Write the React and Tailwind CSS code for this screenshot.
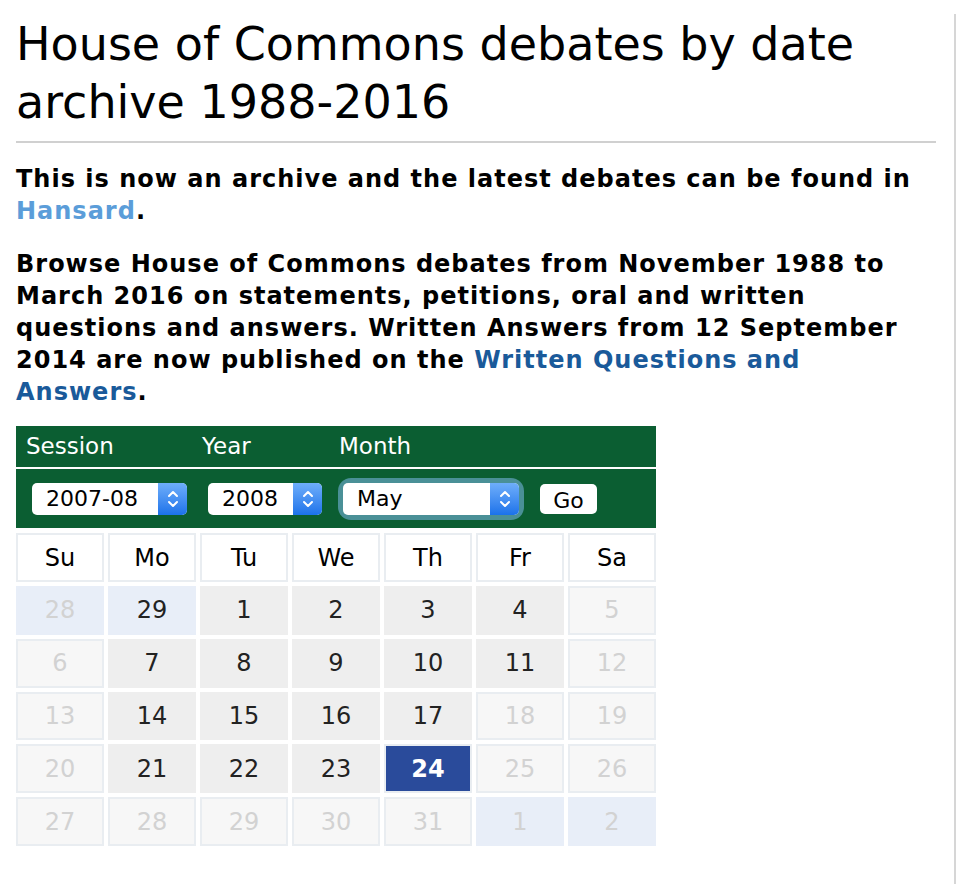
import React from 'react'

const FONT = { fontFamily: '"DejaVu Sans", Verdana, sans-serif' }

// kind: d = has debates, e = empty, o = other month, od = other month with debates, s = selected
const WEEKS = [
  [['28', 'o'], ['29', 'od'], ['1', 'd'], ['2', 'd'], ['3', 'd'], ['4', 'd'], ['5', 'e']],
  [['6', 'e'], ['7', 'd'], ['8', 'd'], ['9', 'd'], ['10', 'd'], ['11', 'd'], ['12', 'e']],
  [['13', 'e'], ['14', 'd'], ['15', 'd'], ['16', 'd'], ['17', 'd'], ['18', 'e'], ['19', 'e']],
  [['20', 'e'], ['21', 'd'], ['22', 'd'], ['23', 'd'], ['24', 's'], ['25', 'e'], ['26', 'e']],
  [['27', 'e'], ['28', 'e'], ['29', 'e'], ['30', 'e'], ['31', 'e'], ['1', 'o'], ['2', 'o']],
]

const DAYS = ['Su', 'Mo', 'Tu', 'We', 'Th', 'Fr', 'Sa']

const cellClass = {
  d: 'bg-[#eeeeee] border-[#eeeeee] text-[#222]',
  e: 'bg-[#f7f7f7] border-[#e9edf1] text-[#d2d2d2]',
  o: 'bg-[#e8eef8] border-[#e8eef8] text-[#d2d2d2]',
  od: 'bg-[#e8eef8] border-[#e8eef8] text-[#222]',
  s: 'bg-[#2a4b9b] border-[#e9edf1] text-white font-bold',
}

function Chevrons() {
  return (
    <svg width="12" height="20" viewBox="0 0 12 20" fill="none" stroke="white" strokeWidth="2" strokeLinecap="round" strokeLinejoin="round">
      <path d="M2 7 L6 3 L10 7" />
      <path d="M2 13 L6 17 L10 13" />
    </svg>
  )
}

function FakeSelect({ value, width }) {
  return (
    <div className={`flex h-[32px] rounded-[5px] bg-white overflow-hidden ${width}`}>
      <span className="flex-1 pl-[14px] text-[22px] leading-[32px] text-black">{value}</span>
      <span className="w-[29px] flex items-center justify-center bg-gradient-to-b from-[#6eaefa] to-[#1a72ea]">
        <Chevrons />
      </span>
    </div>
  )
}

export default function App() {
  return (
    <div className="flex h-[884px] bg-white" style={FONT}>
      <div className="flex-1 pl-4 pr-[18px]">
        <h1 className="mt-4 pb-[10px] border-b-2 border-[#d0d0d0] text-[46px] leading-[57.6px] font-normal text-black">
          House of Commons debates by date archive 1988-2016
        </h1>

        <p className="mt-[20px] text-[24px] leading-[32px] tracking-[1px] font-bold text-black">
          This is now an archive and the latest debates can be found in{' '}
          <a className="text-[#5b9dd9]">Hansard</a>.
        </p>
        <p className="mt-[21px] text-[24px] leading-[32px] tracking-[1px] font-bold text-black">
          Browse House of Commons debates from November 1988 to March 2016 on statements, petitions, oral and written
          questions and answers. Written Answers from 12 September 2014 are now published on the{' '}
          <a className="text-[#1a5a9a]">Written Questions and Answers</a>.
        </p>

        <div className="mt-[18px] w-[640px]">
          <div className="flex h-[41px] items-center bg-[#0b5e32] text-white text-[23px]">
            <span className="w-[176px] pl-[10px]">Session</span>
            <span className="w-[137px] pl-[10px]">Year</span>
            <span className="pl-[10px]">Month</span>
          </div>
          <div className="flex h-[59px] items-center mt-[2px] bg-[#0b5e32] pl-[16px]">
            <FakeSelect value="2007-08" width="w-[155px]" />
            <div className="ml-[21px]">
              <FakeSelect value="2008" width="w-[114px]" />
            </div>
            <div className="ml-[21px] rounded-[8px] ring-[5px] ring-[#4a9097]">
              <FakeSelect value="May" width="w-[176px]" />
            </div>
            <button className="ml-[21px] h-[30px] w-[57px] rounded-[5px] bg-white text-[22px] text-black">Go</button>
          </div>

          <div className="mt-[5px] grid grid-cols-7 gap-[4px] text-[24px]">
            {DAYS.map(d => (
              <div key={d} className="h-[48.8px] flex items-center justify-center bg-white border-2 border-[#e9edf1] text-black">
                {d}
              </div>
            ))}
            {WEEKS.flat().map(([n, k], i) => (
              <div key={i} className={`h-[48.8px] flex items-center justify-center border-2 ${cellClass[k]}`}>
                {n}
              </div>
            ))}
          </div>
        </div>
      </div>
      <div className="w-[2px] mt-[14px] bg-[#d6d6d6]" />
    </div>
  )
}
